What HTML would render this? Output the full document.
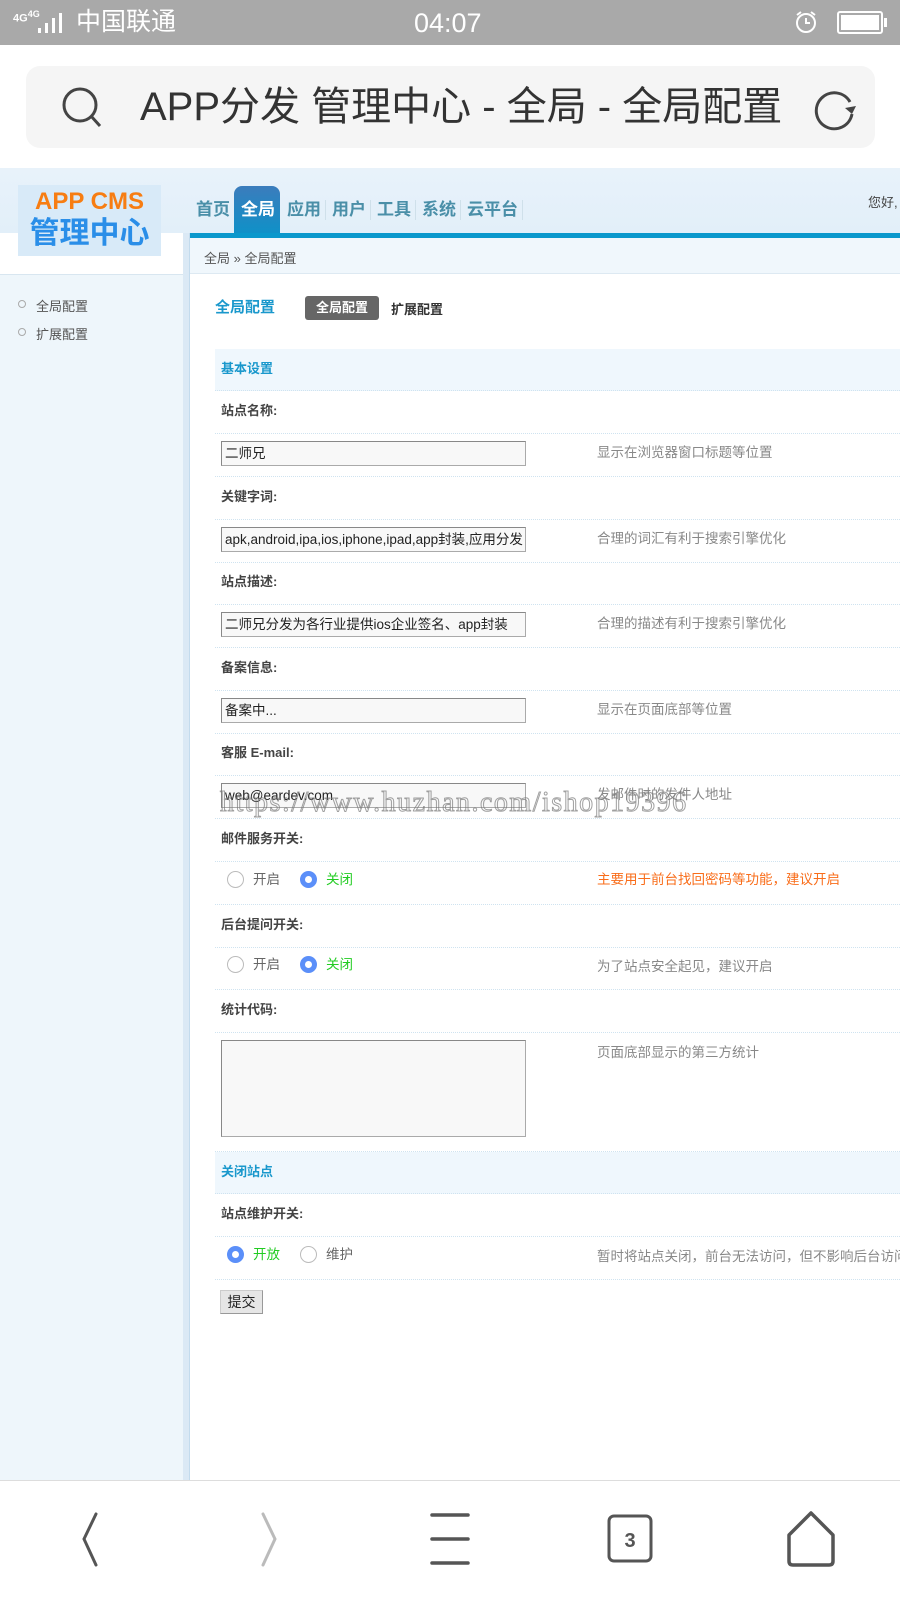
<!DOCTYPE html>
<html><head><meta charset="utf-8"><style>
*{margin:0;padding:0;box-sizing:border-box}
body{width:900px;height:1600px;overflow:hidden;background:#fff;font-family:"Liberation Sans","Noto Sans CJK SC",sans-serif;position:relative;font-size:13px;color:#333}
.a{position:absolute}
.row{position:absolute;left:215px;right:0;height:43px;border-bottom:1px dotted #cfe3f0}
.lbl{position:absolute;left:6px;top:0;line-height:40px;font-weight:bold;color:#444;font-size:13px}
.inp{position:absolute;left:6px;top:7px;width:305px;height:25px;background:#f8f8f8;border:1px solid #aaa;border-top-color:#888;border-left-color:#888;font-size:13.5px;line-height:23px;padding-left:3px;color:#222;overflow:hidden;white-space:nowrap}
.desc{position:absolute;left:382px;top:0;line-height:38px;color:#888;font-size:13.5px;white-space:nowrap}
.sec{position:absolute;left:215px;right:0;height:42px;background:#eff7fd;border-bottom:1px dotted #cfe3f0;color:#1a98cc;font-weight:bold;line-height:40px;padding-left:6px}
.r{position:absolute;top:9px;width:17px;height:17px;border-radius:50%;border:1.5px solid #bbb;background:#fff}
.rc{border:5px solid #5b8ff9}
.rt{position:absolute;top:0;line-height:36px;font-size:13.5px}
.nv{position:absolute;top:198px;font-size:17px;font-weight:bold;line-height:24px;color:#4a8fa8;white-space:nowrap}
.sp{position:absolute;top:200px;width:1px;height:20px;background:#cfe0ea}
</style></head><body>
<div class="a" style="left:0;top:0;width:900px;height:45px;background:#a9a9a9"></div>
<div class="a" style="left:13px;top:9px;color:#fff;font-size:11px;font-weight:bold;line-height:11px">4G<sup style="font-size:9px">4G</sup></div>
<svg class="a" style="left:36px;top:12px" width="34" height="22"><rect x="2" y="16" width="3" height="5" fill="#fff"/><rect x="9" y="11" width="3" height="10" fill="#fff"/><rect x="16" y="6" width="3" height="15" fill="#fff"/><rect x="23" y="1" width="3" height="20" fill="#fff"/></svg>
<div class="a" style="left:76px;top:6px;color:#fff;font-size:25px;line-height:32px">中国联通</div>
<div class="a" style="left:414px;top:6px;color:#fff;font-size:27px;line-height:34px">04:07</div>
<svg class="a" style="left:793px;top:9px" width="26" height="26"><circle cx="13" cy="14" r="9" fill="none" stroke="#fff" stroke-width="2"/><path d="M13 9v5h4M4 6l4-3M22 6l-4-3" stroke="#fff" stroke-width="2" fill="none"/></svg>
<div class="a" style="left:837px;top:11px;width:46px;height:23px;border:2px solid #fff;border-radius:3px;padding:2px"><div style="background:#fff;width:100%;height:100%"></div></div>
<div class="a" style="left:884px;top:18px;width:3px;height:9px;background:#fff"></div>
<div class="a" style="left:26px;top:66px;width:849px;height:82px;background:#f5f5f5;border-radius:14px"></div>
<svg class="a" style="left:60px;top:85px" width="46" height="46"><circle cx="20" cy="20" r="16" fill="none" stroke="#444" stroke-width="3"/><path d="M31 31l9 10" stroke="#444" stroke-width="3"/></svg>
<div class="a" style="left:140px;top:81px;font-size:40px;line-height:52px;color:#333;white-space:nowrap">APP分发 管理中心 - 全局 - 全局配置</div>
<svg class="a" style="left:812px;top:86px" width="48" height="46"><path d="M38 16A18 18 0 1 0 40 28" fill="none" stroke="#444" stroke-width="3"/><path d="M33 22l7 6 4-8" fill="#444"/></svg>
<div class="a" style="left:0;top:168px;width:900px;height:65px;background:linear-gradient(#e8f2fa,#e2eff9)"></div>
<div class="a" style="left:18px;top:185px;width:143px;height:71px;background:#d8eaf8;text-align:center">
<div style="color:#f77d12;font-weight:bold;font-size:24px;line-height:28px;margin-top:3px">APP CMS</div>
<div style="color:#2a8ee8;font-weight:bold;font-size:30px;line-height:36px">管理中心</div></div>
<div class="a" style="left:0;top:258px;width:183px;height:16px;background:#fff"></div>
<div class="a" style="left:234px;top:186px;width:46px;height:52px;background:linear-gradient(#3b7cbc,#0b93c9);border-radius:8px 8px 0 0"></div>
<div class="nv" style="left:196px">首页</div>
<div class="nv" style="left:241px;color:#fff">全局</div>
<div class="nv" style="left:287px">应用</div><div class="sp" style="left:325px"></div>
<div class="nv" style="left:332px">用户</div><div class="sp" style="left:370px"></div>
<div class="nv" style="left:377px">工具</div><div class="sp" style="left:415px"></div>
<div class="nv" style="left:422px">系统</div><div class="sp" style="left:460px"></div>
<div class="nv" style="left:467px">云平台</div><div class="sp" style="left:522px"></div>
<div class="a" style="left:868px;top:192px;font-size:13px;color:#444">您好,</div>
<div class="a" style="left:190px;top:233px;width:710px;height:5px;background:#0a98cc"></div>
<div class="a" style="left:190px;top:238px;width:710px;height:36px;background:#f0f7fc;border-bottom:1px solid #dde9f2"></div>
<div class="a" style="left:204px;top:248px;font-size:13px;color:#555">全局 » 全局配置</div>
<div class="a" style="left:0;top:274px;width:183px;height:1206px;background:#eef6fb;border-top:1px solid #d8e6f0"></div>
<div class="a" style="left:183px;top:233px;width:7px;height:1247px;background:#dbe9f5;border-right:1px solid #c3dbed"></div>
<div class="a" style="left:18px;top:300px;width:8px;height:8px;border:1px solid #aaa;border-radius:50%"></div>
<div class="a" style="left:36px;top:296px;font-size:13px;color:#555">全局配置</div>
<div class="a" style="left:18px;top:328px;width:8px;height:8px;border:1px solid #aaa;border-radius:50%"></div>
<div class="a" style="left:36px;top:324px;font-size:13px;color:#555">扩展配置</div>
<div class="a" style="left:215px;top:296px;font-size:15px;font-weight:bold;color:#1a98cc">全局配置</div>
<div class="a" style="left:305px;top:296px;width:74px;height:24px;background:#666;border-radius:3px;color:#fff;font-weight:bold;text-align:center;line-height:24px">全局配置</div>
<div class="a" style="left:391px;top:299px;font-weight:bold;color:#333">扩展配置</div>
<div class="sec" style="top:349px">基本设置</div>
<div class="row" style="top:391px"><div class="lbl">站点名称:</div></div>
<div class="row" style="top:434px"><div class="inp">二师兄</div><div class="desc">显示在浏览器窗口标题等位置</div></div>
<div class="row" style="top:477px"><div class="lbl">关键字词:</div></div>
<div class="row" style="top:520px"><div class="inp">apk,android,ipa,ios,iphone,ipad,app封装,应用分发</div><div class="desc">合理的词汇有利于搜索引擎优化</div></div>
<div class="row" style="top:562px"><div class="lbl">站点描述:</div></div>
<div class="row" style="top:605px"><div class="inp">二师兄分发为各行业提供ios企业签名、app封装</div><div class="desc">合理的描述有利于搜索引擎优化</div></div>
<div class="row" style="top:648px"><div class="lbl">备案信息:</div></div>
<div class="row" style="top:691px"><div class="inp">备案中...</div><div class="desc">显示在页面底部等位置</div></div>
<div class="row" style="top:733px"><div class="lbl">客服 E-mail:</div></div>
<div class="row" style="top:776px"><div class="inp">web@eardev.com</div><div class="desc">发邮件时的发件人地址</div></div>
<div class="row" style="top:819px"><div class="lbl">邮件服务开关:</div></div>
<div class="row" style="top:862px"><div class="r" style="left:12px"></div><div class="rt" style="left:38px;color:#666">开启</div><div class="r rc" style="left:85px"></div><div class="rt" style="left:111px;color:#2c2">关闭</div><div class="desc" style="color:#f96d1a;line-height:36px">主要用于前台找回密码等功能，建议开启</div></div>
<div class="row" style="top:905px"><div class="lbl">后台提问开关:</div></div>
<div class="row" style="top:947px"><div class="r" style="left:12px"></div><div class="rt" style="left:38px;color:#666">开启</div><div class="r rc" style="left:85px"></div><div class="rt" style="left:111px;color:#2c2">关闭</div><div class="desc" style="line-height:40px">为了站点安全起见，建议开启</div></div>
<div class="row" style="top:990px"><div class="lbl">统计代码:</div></div>
<div class="row" style="top:1033px;height:119px"><div class="inp" style="top:7px;height:97px"></div><div class="desc" style="line-height:30px;top:5px">页面底部显示的第三方统计</div></div>
<div class="sec" style="top:1152px">关闭站点</div>
<div class="row" style="top:1194px"><div class="lbl">站点维护开关:</div></div>
<div class="row" style="top:1237px"><div class="r rc" style="left:12px"></div><div class="rt" style="left:38px;color:#2c2">开放</div><div class="r" style="left:85px"></div><div class="rt" style="left:111px;color:#666">维护</div><div class="desc" style="line-height:40px">暂时将站点关闭，前台无法访问，但不影响后台访问</div></div>
<div class="a" style="left:220px;top:1290px;width:43px;height:24px;background:#e6e6e6;border:1px solid #999;border-top-color:#ccc;border-left-color:#ccc;font-size:14px;line-height:22px;text-align:center;color:#222">提交</div>
<div class="a" style="left:220px;top:786px;font-family:'Liberation Serif',serif;font-size:28px;line-height:34px;color:transparent;-webkit-text-stroke:1px rgba(120,120,120,.7);white-space:nowrap;letter-spacing:1.5px">https://www.huzhan.com/ishop19396</div>
<div class="a" style="left:0;top:1480px;width:900px;height:120px;background:#fff;border-top:1px solid #ddd"></div>
<svg class="a" style="left:0;top:1480px" width="900" height="120">
<path d="M96 34L84 59L96 85" fill="none" stroke="#555" stroke-width="3" stroke-linecap="round"/>
<path d="M263 34L275 59L263 85" fill="none" stroke="#bbb" stroke-width="3" stroke-linecap="round"/>
<path d="M432 35h36M432 59h36M432 83h36" stroke="#555" stroke-width="3.5" stroke-linecap="round"/>
<rect x="609" y="36" width="42" height="45" rx="5" fill="none" stroke="#555" stroke-width="3"/>
<text x="630" y="67" text-anchor="middle" font-family="Liberation Sans" font-weight="bold" font-size="20" fill="#555">3</text>
<path d="M811 33L789 55V81q0 4 4 4h36q4 0 4-4V55L811 33z" fill="none" stroke="#555" stroke-width="3.5" stroke-linejoin="round"/>
</svg>
</body></html>
